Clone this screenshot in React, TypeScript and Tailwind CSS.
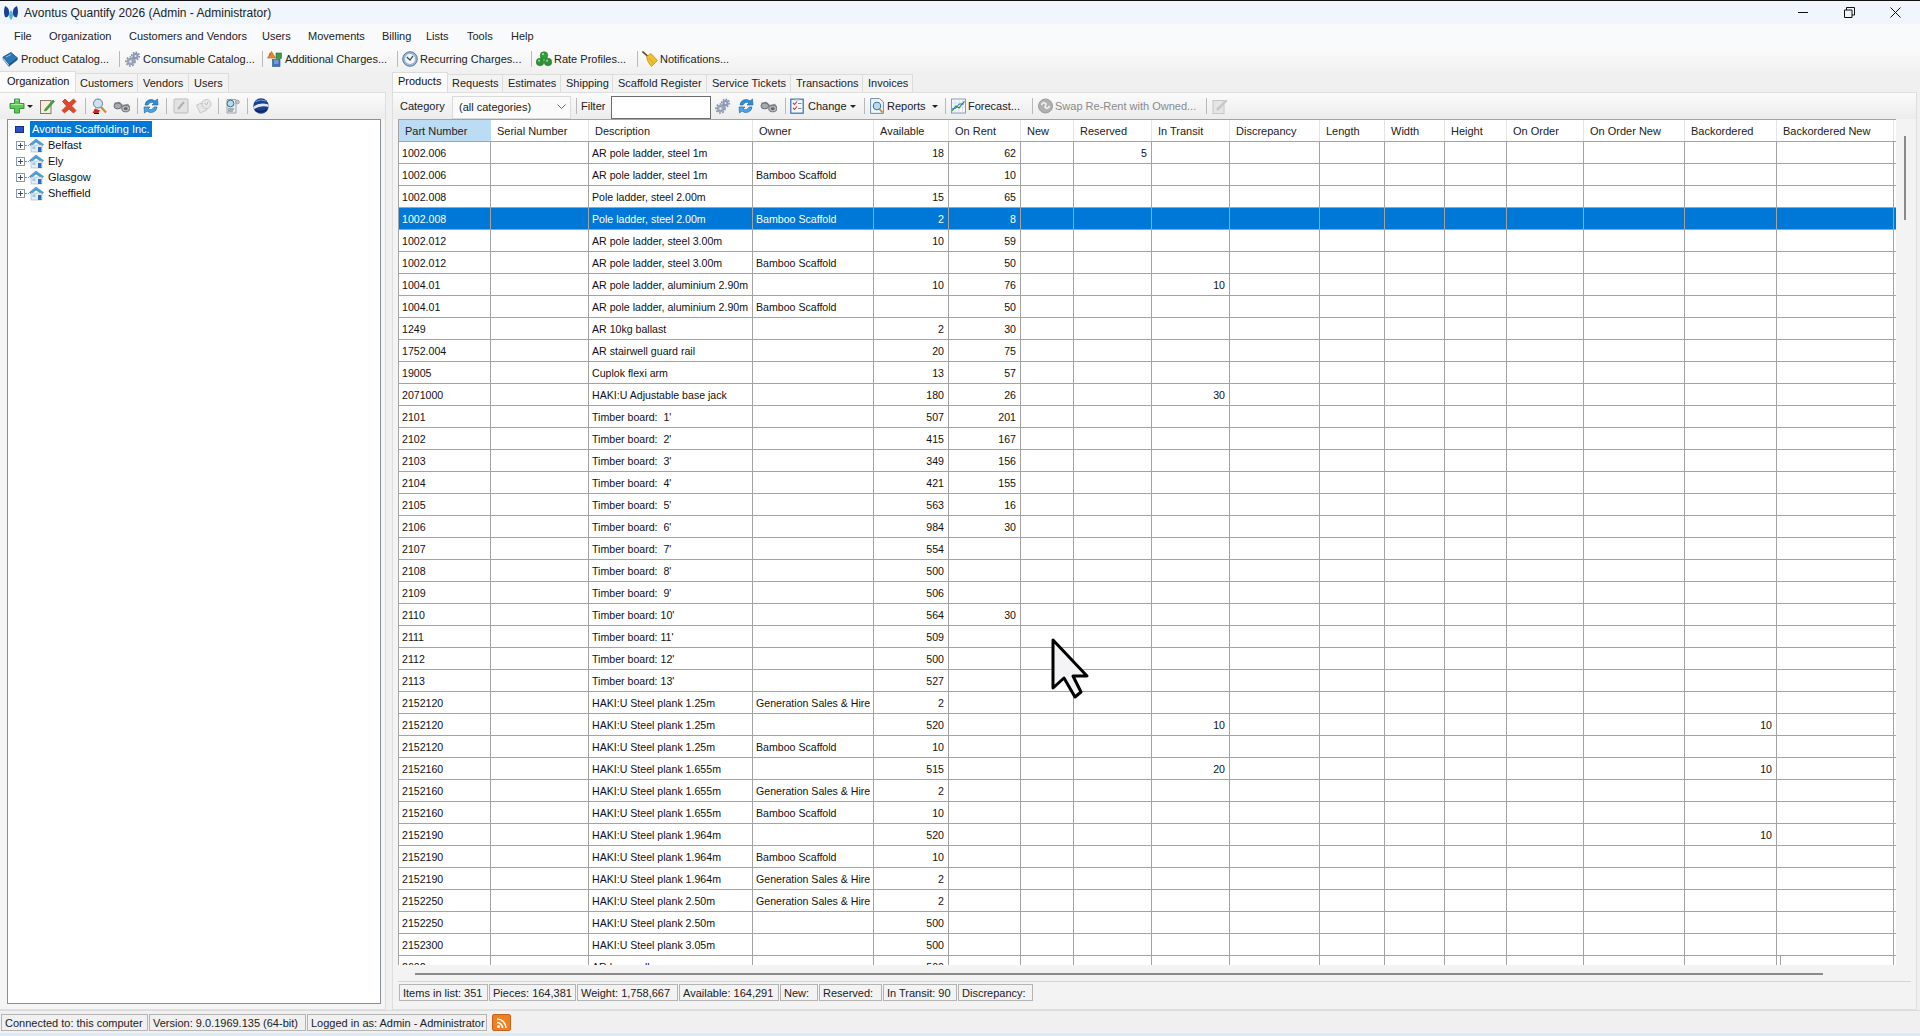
import React from "react";

type Row = [string, string, string, string, string, string?, string?, string?];

const T = "Timber board:  ";
const GS = "Generation Sales & Hire";
const BS = "Bamboo Scaffold";
const H = "HAKI:U Steel plank ";
const rows: Row[] = [
  ["1002.006", "AR pole ladder, steel 1m", "", "18", "62", "5"],
  ["1002.006", "AR pole ladder, steel 1m", BS, "", "10"],
  ["1002.008", "Pole ladder, steel 2.00m", "", "15", "65"],
  ["1002.008", "Pole ladder, steel 2.00m", BS, "2", "8"],
  ["1002.012", "AR pole ladder, steel 3.00m", "", "10", "59"],
  ["1002.012", "AR pole ladder, steel 3.00m", BS, "", "50"],
  ["1004.01", "AR pole ladder, aluminium 2.90m", "", "10", "76", "", "10"],
  ["1004.01", "AR pole ladder, aluminium 2.90m", BS, "", "50"],
  ["1249", "AR 10kg ballast", "", "2", "30"],
  ["1752.004", "AR stairwell guard rail", "", "20", "75"],
  ["19005", "Cuplok flexi arm", "", "13", "57"],
  ["2071000", "HAKI:U Adjustable base jack", "", "180", "26", "", "30"],
  ["2101", T + "1'", "", "507", "201"],
  ["2102", T + "2'", "", "415", "167"],
  ["2103", T + "3'", "", "349", "156"],
  ["2104", T + "4'", "", "421", "155"],
  ["2105", T + "5'", "", "563", "16"],
  ["2106", T + "6'", "", "984", "30"],
  ["2107", T + "7'", "", "554", ""],
  ["2108", T + "8'", "", "500", ""],
  ["2109", T + "9'", "", "506", ""],
  ["2110", "Timber board: 10'", "", "564", "30"],
  ["2111", "Timber board: 11'", "", "509", ""],
  ["2112", "Timber board: 12'", "", "500", ""],
  ["2113", "Timber board: 13'", "", "527", ""],
  ["2152120", H + "1.25m", GS, "2", ""],
  ["2152120", H + "1.25m", "", "520", "", "", "10", "10"],
  ["2152120", H + "1.25m", BS, "10", ""],
  ["2152160", H + "1.655m", "", "515", "", "", "20", "10"],
  ["2152160", H + "1.655m", GS, "2", ""],
  ["2152160", H + "1.655m", BS, "10", ""],
  ["2152190", H + "1.964m", "", "520", "", "", "", "10"],
  ["2152190", H + "1.964m", BS, "10", ""],
  ["2152190", H + "1.964m", GS, "2", ""],
  ["2152250", H + "2.50m", GS, "2", ""],
  ["2152250", H + "2.50m", "", "500", ""],
  ["2152300", H + "3.05m", "", "500", ""],
  ["2602", "AR base roll", "", "500", ""],
];

const GRID =
  "grid grid-cols-[92px_98px_164px_121px_75px_72px_53px_78px_78px_90px_65px_60px_62px_77px_101px_92px_117px_2px]";

const headers = [
  "Part Number", "Serial Number", "Description", "Owner", "Available", "On Rent", "New", "Reserved", "In Transit",
  "Discrepancy", "Length", "Width", "Height", "On Order", "On Order New", "Backordered", "Backordered New",
];

function Ico({ w = 16, h = 16, vb = "0 0 16 16", children }: { w?: number; h?: number; vb?: string; children: React.ReactNode }) {
  return (
    <svg width={w} height={h} viewBox={vb} className="shrink-0 block">
      {children}
    </svg>
  );
}

const Book = () => (
  <Ico>
    <path d="M1 6 L9 1.5 L15.5 7 L7 13.5 Z" fill="#2a77b8" stroke="#174f82" strokeWidth="0.8" />
    <path d="M1 6 L7 13.5 L7 15.5 L1.2 8.5 Z" fill="#dfe9f2" stroke="#174f82" strokeWidth="0.6" />
    <path d="M7 13.5 L15.5 7 L15.5 9 L7 15.5 Z" fill="#184f85" />
    <path d="M4 6 L9 3.5" stroke="#8cc0ea" strokeWidth="1" />
  </Ico>
);
const Gears = ({ w = 16 }: { w?: number }) => (
  <Ico w={w} h={w}>
    <circle cx="10.5" cy="5" r="3.9" fill="none" stroke="#7d8cab" strokeWidth="1.4" strokeDasharray="1.6 1.4" />
    <circle cx="10.5" cy="5" r="3.2" fill="#8c9ab6" />
    <circle cx="10.5" cy="5" r="1" fill="#e3e6ee" />
    <circle cx="5.5" cy="10.5" r="4.5" fill="none" stroke="#868fa6" strokeWidth="1.6" strokeDasharray="1.8 1.5" />
    <circle cx="5.5" cy="10.5" r="3.8" fill="#98a2b8" />
    <circle cx="5.5" cy="10.5" r="1.3" fill="#e8eaf0" />
  </Ico>
);
const Charges = () => (
  <Ico>
    <path d="M4.5 0.5 L8.5 7 L0.5 7 Z" fill="#ee8a2a" stroke="#b5561a" strokeWidth="0.6" />
    <path d="M2 2.5 L3.8 2.5 L3 5 Z" fill="#d8342a" />
    <rect x="9" y="2" width="5.5" height="5.5" fill="#3c9c4a" stroke="#256d33" strokeWidth="0.6" />
    <rect x="5.5" y="8.5" width="7.5" height="7" fill="#3f74b9" stroke="#244f8a" strokeWidth="0.6" />
    <path d="M7 10 L11.5 10 M7 12 L11.5 12" stroke="#bcd6f2" strokeWidth="0.8" />
  </Ico>
);
const ClockI = () => (
  <Ico>
    <circle cx="8" cy="8" r="7.3" fill="#9bb8d4" stroke="#4f6f92" strokeWidth="0.9" />
    <circle cx="8" cy="8" r="5" fill="#f3f7fb" />
    <path d="M4.8 6 L8 9 L11 4.8" fill="none" stroke="#33475f" strokeWidth="1.2" />
  </Ico>
);
const Balls = () => (
  <Ico>
    <circle cx="8" cy="4.5" r="3.8" fill="#2fa039" stroke="#18692a" strokeWidth="0.5" />
    <circle cx="4" cy="11" r="3.8" fill="#2b9436" stroke="#18692a" strokeWidth="0.5" />
    <circle cx="12" cy="11" r="3.8" fill="#2b9436" stroke="#18692a" strokeWidth="0.5" />
    <circle cx="7" cy="3.2" r="1.1" fill="#9be08d" />
    <circle cx="3" cy="9.7" r="1.1" fill="#8fd884" />
    <circle cx="11" cy="9.7" r="1.1" fill="#8fd884" />
  </Ico>
);
const Broom = () => (
  <Ico>
    <path d="M0.5 0.5 L6 5.5" stroke="#5f4a1c" strokeWidth="1.6" />
    <path d="M4.5 5.5 L9 2.5 L15.5 9.5 L9.5 15.5 Q5 11 4.5 5.5 Z" fill="#f2bf31" stroke="#b98a14" strokeWidth="0.7" />
    <path d="M7 7 L11.5 12.5" stroke="#c99a1c" strokeWidth="0.8" />
  </Ico>
);
const Plus = () => (
  <Ico>
    <path d="M5.5 1 H10.5 V5.5 H15 V10.5 H10.5 V15 H5.5 V10.5 H1 V5.5 H5.5 Z" fill="#5cc85a" stroke="#2c8a35" strokeWidth="0.9" />
    <path d="M6.5 2.2 H9.5 M2.2 6.6 H14" stroke="#b5efa8" strokeWidth="1" />
  </Ico>
);
const EditDoc = () => (
  <Ico>
    <rect x="1.5" y="2.5" width="10.5" height="13" fill="#f5edd9" stroke="#77705e" strokeWidth="0.9" />
    <path d="M6 11 L14 2 L15.5 3.5 L7.5 12.5 L5.5 13 Z" fill="#4ba33f" stroke="#2b6d28" strokeWidth="0.5" />
  </Ico>
);
const RedX = () => (
  <Ico>
    <path d="M1.5 3.5 L4 1 L8 5 L12.5 1 L15 3.5 L10.5 8 L15 12.5 L12.5 15 L8 11 L3.5 15 L1 12.5 L5.5 8 Z" fill="#e2482c" stroke="#b12f16" strokeWidth="0.7" />
  </Ico>
);
const SearchP = () => (
  <Ico>
    <circle cx="7" cy="5.5" r="4.5" fill="#cfe1ef" stroke="#667a90" strokeWidth="1" />
    <path d="M10 9 L15 14.5" stroke="#d08a1c" strokeWidth="2" />
    <path d="M1.5 15 L4 10.5 L9 12.5 L7 15.5 Z" fill="#d3241d" />
    <path d="M3 15.5 L8 15.5" stroke="#111" strokeWidth="1" />
  </Ico>
);
const Binoc = ({ w = 17 }: { w?: number }) => (
  <Ico w={w} h={w}>
    <path d="M1 5 L6 4 L9 7 L14 6 L16 9" fill="none" stroke="#8a8f95" strokeWidth="1" />
    <ellipse cx="4.5" cy="7.5" rx="3.6" ry="2.8" fill="#a7abb0" stroke="#5d6166" strokeWidth="0.8" />
    <ellipse cx="12" cy="10" rx="3.8" ry="3" fill="#b5b8bc" stroke="#5d6166" strokeWidth="0.8" />
    <ellipse cx="12" cy="10" rx="1.8" ry="1.4" fill="#5f6468" />
  </Ico>
);
const Refresh = () => (
  <Ico>
    <path d="M2 7 A6 6 0 0 1 12 3 L14.5 1 L15 7 L9 7 L11 5 A4 4 0 0 0 5 7 Z" fill="#2f8ed8" stroke="#1a5e9c" strokeWidth="0.6" />
    <path d="M14 9 A6 6 0 0 1 4 13 L1.5 15 L1 9 L7 9 L5 11 A4 4 0 0 0 11 9 Z" fill="#4aa6e8" stroke="#1a5e9c" strokeWidth="0.6" />
  </Ico>
);
const DisabledNote = () => (
  <Ico>
    <rect x="1" y="1" width="14" height="14" rx="1" fill="#e2e2e2" stroke="#bdbdbd" />
    <path d="M5 11 L11 4" stroke="#b0b0b0" strokeWidth="2" />
  </Ico>
);
const DisabledClock = () => (
  <Ico>
    <path d="M0.5 7 L8 4 L11 12 L4 15 Z" fill="#e6e6e6" stroke="#c8c8c8" />
    <circle cx="10.5" cy="6" r="4.5" fill="#e9e9e9" stroke="#c4c4c4" />
    <path d="M8.5 5 L10.5 7 L12 4" fill="none" stroke="#b9b9b9" />
  </Ico>
);
const Scan = () => (
  <Ico>
    <path d="M3 1.5 H12 V15 H3 Z" fill="#e7ebef" stroke="#8b939b" strokeWidth="0.8" />
    <circle cx="6.5" cy="5.5" r="3.4" fill="#b4dbe8" stroke="#3c6f8d" strokeWidth="1" />
    <circle cx="13.5" cy="4" r="1.8" fill="#c8ced4" stroke="#80878e" strokeWidth="0.7" />
    <path d="M4 11 H10 M4 13 H9" stroke="#5a636c" strokeWidth="0.9" />
  </Ico>
);
const Globe = () => (
  <Ico>
    <circle cx="8" cy="8" r="7.7" fill="#1d3f8f" />
    <path d="M0.8 8.5 Q6 4 15.5 6.5 L15.5 9 Q8 7 1 11 Z" fill="#dfe8f4" />
    <path d="M2.5 3.5 Q8 0.8 13 3" fill="none" stroke="#6ea0df" strokeWidth="1" />
    <path d="M2 12 Q8 15.5 14 11.5" fill="none" stroke="#0d2560" strokeWidth="1.5" />
  </Ico>
);
const CheckDoc = () => (
  <Ico w={14} h={16} vb="0 0 14 16">
    <rect x="0.8" y="1.2" width="12.4" height="14" fill="#f6f7fb" stroke="#2f6fb3" strokeWidth="1.2" />
    <rect x="4.5" y="0.2" width="5" height="2.2" fill="#8db7de" />
    <path d="M3 5 L4.5 6.5 L7 3.5 M3 10 L4.5 11.5 L7 8.5" fill="none" stroke="#d5322a" strokeWidth="1.1" />
    <path d="M8 5.5 H11.5 M8 10.5 H11.5" stroke="#7a8a9e" strokeWidth="1" />
  </Ico>
);
const ReportI = () => (
  <Ico w={14} h={16} vb="0 0 14 16">
    <path d="M0.6 0.6 H9.5 L13.4 4 V15.4 H0.6 Z" fill="#f2f6fa" stroke="#5b82a8" strokeWidth="0.9" />
    <circle cx="7" cy="8" r="3.7" fill="#b7dbf2" stroke="#49739a" strokeWidth="1.1" />
    <path d="M9.5 11 L12.5 14.5" stroke="#c98a2a" strokeWidth="1.8" />
  </Ico>
);
const Chart = () => (
  <Ico w={15} h={16} vb="0 0 15 16">
    <rect x="0.5" y="1" width="14" height="14" fill="#f7fafc" stroke="#6d86a3" strokeWidth="0.8" />
    <path d="M4 1 V15 M8 1 V15 M11.5 1 V15 M1 5 H14 M1 9 H14" stroke="#c7d4e0" strokeWidth="0.6" />
    <path d="M1 13 L5 8 L8 10 L13.5 3" fill="none" stroke="#1f9a35" strokeWidth="1.2" />
    <path d="M1 11 L5 10 L8 6 L13 6" fill="none" stroke="#2a6fc9" strokeWidth="1" />
  </Ico>
);
const SwapI = () => (
  <Ico w={15} h={16} vb="0 0 15 16">
    <circle cx="7.5" cy="8" r="7" fill="#b0b0b0" stroke="#9b9b9b" />
    <path d="M3.5 7 Q5 3 8 6 L7 9 Q9.5 12 11.5 8" fill="none" stroke="#f0f0f0" strokeWidth="1.7" />
  </Ico>
);
const DisabledEdit = () => (
  <Ico>
    <rect x="1" y="2.5" width="11" height="13" fill="#e5e5e5" stroke="#c6c6c6" />
    <path d="M4 11 L14 1.5 L15.5 3 L6 13 Z" fill="#c7c7c7" />
  </Ico>
);
const Caret = () => <span className="block w-0 h-0 shrink-0 border-l-[3px] border-r-[3px] border-t-[3px] border-l-transparent border-r-transparent border-t-[#222]" />;
const Sep = () => <span className="block w-px h-[16px] bg-[#b9b9b9] shrink-0" />;

const Home = () => (
  <Ico w={15} h={15} vb="0 0 15 15">
    <path d="M0.5 6.5 L7 1 L14.5 6.5 L13 8 L7 4 L2 8 Z" fill="#4aa3dc" stroke="#2a6d9c" strokeWidth="0.5" />
    <rect x="2" y="7" width="11" height="7" fill="#e7edf3" stroke="#8fa3b5" strokeWidth="0.5" />
    <rect x="9" y="9" width="3.4" height="5" fill="#2a6fb8" />
    <rect x="3.5" y="8.5" width="3" height="2.5" fill="#9dc6e8" />
  </Ico>
);

const Expander = () => (
  <span className="w-[9px] h-[9px] border border-[#8c99a8] bg-white flex items-center justify-center shrink-0">
    <svg width="7" height="7" viewBox="0 0 7 7" className="block">
      <path d="M1 3.5 H6 M3.5 1 V6" stroke="#3b4f6b" strokeWidth="1" />
    </svg>
  </span>
);

function TreeNode({ label }: { label: string }) {
  return (
    <div className="h-[16px] flex items-center pl-[8px]">
      <Expander />
      <span className="block w-[4px] border-t border-dotted border-[#888]" />
      <Home />
      <span className="ml-[4px] text-[#111]">{label}</span>
    </div>
  );
}

function Stat({ cls, children }: { cls: string; children: React.ReactNode }) {
  return <div className={`h-[17px] border border-[#b4b4b4] flex items-center pl-[3px] pt-[1px] whitespace-nowrap overflow-hidden text-[#222] ${cls}`}>{children}</div>;
}

function MainRow({ r, i }: { r: Row; i: number }) {
  const sel = i === 3;
  const cells = [r[0], "", r[1], r[2], r[3], r[4], "", r[5] ?? "", r[6] ?? "", "", "", "", "", "", "", r[7] ?? "", ""];
  return (
    <div className={`${GRID} h-[22px] border-b border-[#a3a3a3] text-[10.6px] ${sel ? "bg-[#0078d7] text-white" : "bg-white text-[#111]"}`}>
      {cells.map((c, k) => (
        <div
          key={k}
          className={`h-[21px] leading-[23px] border-r border-[#a3a3a3] whitespace-pre overflow-hidden ${k >= 4 ? "text-right pr-[4px]" : "pl-[3px]"}`}
        >
          {k === 16 && i === rows.length - 1 ? <span className="block ml-[3px] h-[21px] border-l border-[#a3a3a3]" /> : c}
        </div>
      ))}
    </div>
  );
}

export default function App() {
  return (
    <div className="relative w-[1920px] h-[1036px] overflow-hidden flex flex-col bg-[#f0f0f0] text-[11px] text-[#111] font-['Liberation_Sans','Noto_Sans',sans-serif]">
      {/* title bar */}
      <div className="h-[24px] shrink-0 border-t border-[#111] bg-[#f0f6fc] flex items-center">
        <svg width="18" height="18" viewBox="0 0 18 18" className="ml-[2px] block shrink-0">
          <path d="M3 2 Q8 4 7 10 Q6 14 3 13 Q1 8 3 2 Z" fill="#1c3f94" />
          <path d="M15 2 Q10 4 11 10 Q12 14 15 13 Q17 8 15 2 Z" fill="#1c3f94" />
          <path d="M9 6 Q13 11 9 16 Q5 11 9 6 Z" fill="#4db5d8" />
        </svg>
        <span className="ml-[4px] text-[12px] text-[#222]">Avontus Quantify 2026 (Admin - Administrator)</span>
        <div className="ml-auto flex items-center">
          <div className="w-[46px] flex justify-center">
            <span className="block w-[10px] h-px bg-[#111]" />
          </div>
          <div className="w-[46px] flex justify-center">
            <svg width="11" height="11" viewBox="0 0 11 11" className="block">
              <path d="M0.5 3 H8 V10.5 H0.5 Z M2.5 3 V0.5 H10.5 V8 H8" fill="none" stroke="#111" />
            </svg>
          </div>
          <div className="w-[46px] flex justify-center mr-[2px]">
            <svg width="11" height="11" viewBox="0 0 11 11" className="block">
              <path d="M0.5 0.5 L10.5 10.5 M10.5 0.5 L0.5 10.5" stroke="#111" />
            </svg>
          </div>
        </div>
      </div>

      {/* menu */}
      <div className="h-[24px] shrink-0 bg-[#f9fafb] flex items-center pl-[14px] text-[#222]">
        <span className="w-[35px]">File</span>
        <span className="w-[80px]">Organization</span>
        <span className="w-[133px]">Customers and Vendors</span>
        <span className="w-[46px]">Users</span>
        <span className="w-[74px]">Movements</span>
        <span className="w-[44px]">Billing</span>
        <span className="w-[41px]">Lists</span>
        <span className="w-[44px]">Tools</span>
        <span>Help</span>
      </div>

      {/* main toolbar */}
      <div className="h-[22px] shrink-0 bg-gradient-to-b from-[#fbfbfb] to-[#f2f2f2] flex items-center pl-[2px] text-[#222]">
        <div className="w-[117px] flex items-center gap-[3px]"><Book /><span>Product Catalog...</span></div>
        <Sep />
        <div className="w-[137px] ml-[5px] flex items-center gap-[2px]"><Gears /><span>Consumable Catalog...</span></div>
        <Sep />
        <div className="w-[130px] ml-[4px] flex items-center gap-[2px]"><Charges /><span>Additional Charges...</span></div>
        <Sep />
        <div className="w-[129px] ml-[4px] flex items-center gap-[2px]"><ClockI /><span>Recurring Charges...</span></div>
        <Sep />
        <div className="w-[101px] ml-[4px] flex items-center gap-[2px]"><Balls /><span>Rate Profiles...</span></div>
        <Sep />
        <div className="ml-[4px] flex items-center gap-[2px]"><Broom /><span>Notifications...</span></div>
      </div>

      {/* panes */}
      <div className="flex-1 min-h-0 flex">
        {/* left pane */}
        <div className="w-[386px] shrink-0 flex flex-col pl-0 pt-[1px]">
          <div className="h-[21px] shrink-0 flex items-end pl-0">
            <div className="w-[76px] h-[21px] bg-[#fbfbfb] border-t border-r border-[#dcdcdc] pl-[7px] leading-[18px]">Organization</div>
            <div className="w-[62px] h-[19px] bg-[#f3f3f3] border-t border-r border-[#dcdcdc] pl-[4px] leading-[18px] text-[#222]">Customers</div>
            <div className="w-[51px] h-[19px] bg-[#f3f3f3] border-t border-r border-[#dcdcdc] pl-[5px] leading-[18px] text-[#222]">Vendors</div>
            <div className="w-[40px] h-[19px] bg-[#f3f3f3] border-t border-r border-[#dcdcdc] pl-[5px] leading-[18px] text-[#222]">Users</div>
          </div>
          <div className="flex-1 min-h-0 flex flex-col border-t border-r border-b border-[#dedede] bg-[#f5f5f5]">
            <div className="h-[26px] shrink-0 bg-gradient-to-b from-[#fbfbfb] to-[#ececec] flex items-center pl-[9px]">
              <Plus />
              <span className="ml-[2px]"><Caret /></span>
              <span className="ml-[6px]"><EditDoc /></span>
              <span className="ml-[6px]"><RedX /></span>
              <span className="ml-[8px]"><Sep /></span>
              <span className="ml-[5px]"><SearchP /></span>
              <span className="ml-[6px]"><Binoc /></span>
              <span className="ml-[7px]"><Sep /></span>
              <span className="ml-[5px]"><Refresh /></span>
              <span className="ml-[7px]"><Sep /></span>
              <span className="ml-[6px]"><DisabledNote /></span>
              <span className="ml-[7px]"><DisabledClock /></span>
              <span className="ml-[6px]"><Sep /></span>
              <span className="ml-[5px]"><Scan /></span>
              <span className="ml-[7px]"><Sep /></span>
              <span className="ml-[5px]"><Globe /></span>
            </div>
            <div className="mx-[7px] mr-[4px] mb-[5px] flex-1 min-h-0 border border-[#8a8f96] bg-white pt-[1px]">
              <div className="h-[16px] flex items-center pl-[7px]">
                <span className="block w-[9px] h-[7px] bg-[#2a50c8] border border-[#16308a]" />
                <span className="ml-[6px] h-[16px] leading-[16px] px-[2px] bg-[#0078d7] text-white w-[122px] whitespace-nowrap">Avontus Scaffolding Inc.</span>
              </div>
              <TreeNode label="Belfast" />
              <TreeNode label="Ely" />
              <TreeNode label="Glasgow" />
              <TreeNode label="Sheffield" />
            </div>
          </div>
        </div>

        {/* right pane */}
        <div className="flex-1 min-w-0 ml-[6px] mr-[3px] flex flex-col pt-[2px]">
          <div className="h-[20px] shrink-0 flex items-end">
            <div className="w-[56px] h-[20px] bg-[#fbfbfb] border-t border-r border-l border-[#dcdcdc] pl-[5px] leading-[16px]">Products</div>
            <div className="w-[55px] h-[18px] bg-[#f3f3f3] border-t border-r border-[#dcdcdc] pl-[4px] leading-[16px] text-[#222]">Requests</div>
            <div className="w-[58px] h-[18px] bg-[#f3f3f3] border-t border-r border-[#dcdcdc] pl-[5px] leading-[16px] text-[#222]">Estimates</div>
            <div className="w-[52px] h-[18px] bg-[#f3f3f3] border-t border-r border-[#dcdcdc] pl-[5px] leading-[16px] text-[#222]">Shipping</div>
            <div className="w-[94px] h-[18px] bg-[#f3f3f3] border-t border-r border-[#dcdcdc] pl-[5px] leading-[16px] text-[#222]">Scaffold Register</div>
            <div className="w-[84px] h-[18px] bg-[#f3f3f3] border-t border-r border-[#dcdcdc] pl-[5px] leading-[16px] text-[#222]">Service Tickets</div>
            <div className="w-[72px] h-[18px] bg-[#f3f3f3] border-t border-r border-[#dcdcdc] pl-[5px] leading-[16px] text-[#222]">Transactions</div>
            <div className="w-[50px] h-[18px] bg-[#f3f3f3] border-t border-r border-[#dcdcdc] pl-[5px] leading-[16px] text-[#222]">Invoices</div>
          </div>
          <div className="flex-1 min-h-0 flex flex-col border-t border-r border-b border-l border-[#dedede] bg-[#f3f3f3]">
            {/* sub toolbar */}
            <div className="h-[26px] shrink-0 bg-gradient-to-b from-[#fbfbfb] to-[#ececec] flex items-center pl-[7px] text-[#222]">
              <span className="w-[52px]">Category</span>
              <div className="w-[119px] h-[23px] bg-[#fafafa] border border-[#dadada] flex items-center pl-[6px] pr-[4px] justify-between mt-[2px]">
                <span>(all categories)</span>
                <svg width="9" height="6" viewBox="0 0 9 6" className="block"><path d="M0.5 0.5 L4.5 4.5 L8.5 0.5" fill="none" stroke="#666" /></svg>
              </div>
              <span className="ml-[5px]"><Sep /></span>
              <span className="ml-[4px] w-[30px]">Filter</span>
              <div className="w-[100px] h-[23px] bg-white border border-[#6d6d6d] mt-[2px]" />
              <span className="ml-[4px]"><Gears /></span>
              <span className="ml-[7px]"><Refresh /></span>
              <span className="ml-[6px]"><Binoc /></span>
              <span className="ml-[8px]"><Sep /></span>
              <span className="ml-[4px]"><CheckDoc /></span>
              <span className="ml-[4px] w-[42px]">Change</span>
              <Caret />
              <span className="ml-[8px]"><Sep /></span>
              <span className="ml-[5px]"><ReportI /></span>
              <span className="ml-[3px] w-[45px]">Reports</span>
              <Caret />
              <span className="ml-[7px]"><Sep /></span>
              <span className="ml-[5px]"><Chart /></span>
              <span className="ml-[2px] w-[64px]">Forecast...</span>
              <Sep />
              <span className="ml-[5px]"><SwapI /></span>
              <span className="ml-[2px] w-[151px] text-[#8a8a8a]">Swap Re-Rent with Owned...</span>
              <Sep />
              <span className="ml-[5px]"><DisabledEdit /></span>
            </div>

            {/* table + vertical scroll */}
            <div className="h-[846px] shrink-0 flex pl-[5px]">
              <div className="w-[1498px] shrink-0 border-t border-l border-[#a3a3a3] bg-white overflow-hidden">
                <div className={`${GRID} h-[22px] border-b border-[#a3a3a3] bg-white`}>
                  {headers.map((h, k) => (
                    <div
                      key={h}
                      className={`h-[21px] leading-[23px] pl-[6px] whitespace-nowrap text-[#222] border-r ${k === 0 ? "bg-[#bcdcf4] border-[#bcdcf4]" : "border-[#e4e4e4]"}`}
                    >
                      {h}
                    </div>
                  ))}
                </div>
                {rows.map((r, i) => (
                  <MainRow key={i} r={r} i={i} />
                ))}
              </div>
              <div className="w-[17px] shrink-0 flex justify-center">
                <span className="block w-[2px] h-[84px] mt-[17px] bg-[#8a8a8a]" />
              </div>
            </div>

            {/* horizontal scroll */}
            <div className="h-[17px] shrink-0 mx-[5px] border-b border-[#d4d4d4] pl-[17px] pt-[8px]">
              <span className="block w-[1408px] h-[2px] bg-[#8a8a8a]" />
            </div>

            {/* stats */}
            <div className="h-[21px] shrink-0 pl-[6px] pt-[2px] flex items-start gap-[1px]">
              <Stat cls="w-[89px]">Items in list: 351</Stat>
              <Stat cls="w-[87px]">Pieces: 164,381</Stat>
              <Stat cls="w-[101px]">Weight: 1,758,667</Stat>
              <Stat cls="w-[100px]">Available: 164,291</Stat>
              <Stat cls="w-[38px]">New:</Stat>
              <Stat cls="w-[63px]">Reserved:</Stat>
              <Stat cls="w-[74px]">In Transit: 90</Stat>
              <Stat cls="w-[75px]">Discrepancy:</Stat>
            </div>
          </div>
        </div>
      </div>

      {/* status bar */}
      <div className="h-[23px] shrink-0 border-t border-[#dcdcdc] bg-[#f0f0f0] flex items-start pl-[1px] gap-[1px] pt-[3px]">
        <Stat cls="w-[147px]">Connected to: this computer</Stat>
        <Stat cls="w-[157px]">Version: 9.0.1969.135 (64-bit)</Stat>
        <Stat cls="w-[180px]">Logged in as: Admin - Administrator</Stat>
        <div className="ml-[4px] w-[19px] h-[17px] rounded-[2px] bg-[#f07f22] border border-[#c8621a] flex items-center justify-center">
          <svg width="12" height="12" viewBox="0 0 12 12" className="block">
            <circle cx="2.5" cy="9.5" r="1.5" fill="#fff" />
            <path d="M1 5.5 A5.5 5.5 0 0 1 6.5 11 M1 2 A9 9 0 0 1 10 11" fill="none" stroke="#fff" strokeWidth="1.6" />
          </svg>
        </div>
      </div>
      <div className="h-[3px] shrink-0 bg-[#dbe9f7]" />

      {/* mouse pointer overlay */}
      <svg width="40" height="64" viewBox="0 0 40 64" className="absolute left-[1050px] top-[637px] block">
        <path d="M3 3 L37 39 L23 39 L31 55 L25 60 L14 41 L3 51 Z" fill="#f4f4f6" stroke="#000" strokeWidth="3" strokeLinejoin="round" />
      </svg>
    </div>
  );
}
